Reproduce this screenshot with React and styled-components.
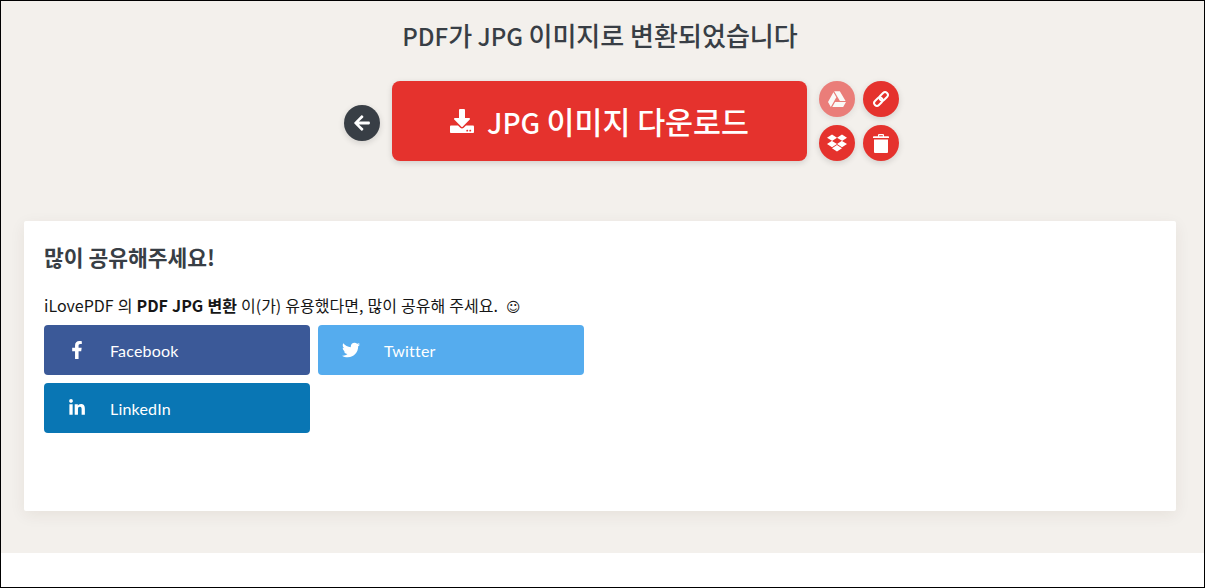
import React from 'react'
import styled, { createGlobalStyle } from 'styled-components'
import { FaArrowLeft, FaDownload, FaGoogleDrive, FaDropbox, FaFacebookF, FaTwitter, FaLinkedinIn } from 'react-icons/fa'

const GlobalStyle = createGlobalStyle`
  html, body { margin: 0; padding: 0; background: #fff; }
  * { box-sizing: border-box; }
  body { font-family: "Noto Sans CJK KR", "Noto Sans", sans-serif; }
`

const Frame = styled.div`
  width: 1205px;
  height: 588px;
  border: 1px solid #000;
  background: #fff;
  overflow: hidden;
`

const Main = styled.main`
  height: 552px;
  background: #f3f0ec;
  padding: 0 28px 0 23px;
  display: flex;
  flex-direction: column;
`

const Title = styled.h2`
  margin: 0;
  height: 80px;
  padding-top: 16px;
  text-align: center;
  font-size: 24px;
  line-height: 36px;
  font-weight: 500;
  color: #383e45;
`

// hangul runs sit a little larger than the latin around them
const Ko = styled.span`
  font-size: 1.085em;
`

const Actions = styled.div`
  display: flex;
  justify-content: center;
  align-items: center;
  height: 80px;
  gap: 12px;
  margin-left: 43px;
`

const RoundButton = styled.a`
  width: 36px;
  height: 36px;
  border-radius: 50%;
  display: flex;
  align-items: center;
  justify-content: center;
  color: #fff;
  font-size: ${({ $size }) => $size || 18}px;
  background: ${({ $dark }) => ($dark ? '#383e45' : '#e5322d')};
  opacity: ${({ $faded }) => ($faded ? 0.6 : 1)};
  box-shadow: 0 2px 6px rgba(0, 0, 0, 0.14);
`

const BackButton = styled(RoundButton)`
  margin-top: 4px;
`

const DownloadButton = styled.a`
  width: 415px;
  height: 80px;
  border-radius: 8px;
  background: #e5322d;
  color: #fff;
  display: flex;
  align-items: center;
  justify-content: center;
  gap: 13px;
  font-size: 28px;
  font-weight: 500;
  box-shadow: 0 2px 6px rgba(0, 0, 0, 0.14);
`

const SideGrid = styled.div`
  display: grid;
  grid-template-columns: 36px 36px;
  grid-auto-rows: 36px;
  gap: 8px;
`

const Card = styled.section`
  margin-top: 60px;
  height: 290px;
  background: #fff;
  padding: 21px 20px 20px;
  border-radius: 2px;
  box-shadow: 0 4px 16px rgba(72, 41, 0, 0.07);
`

const CardTitle = styled.h3`
  margin: 0;
  font-size: 21.5px;
  line-height: 30px;
  font-weight: 700;
  color: #383e45;
`

const CardText = styled.p`
  margin: 21px 0 0;
  font-size: 16px;
  line-height: 24px;
  color: #161616;
  word-spacing: 0.5px;
  strong { font-weight: 700; }
`

const Smile = styled.span`
  font-family: "DejaVu Sans", sans-serif;
  font-size: 14px;
  margin-left: 4px;
`

const ShareGrid = styled.div`
  display: grid;
  grid-template-columns: repeat(2, 266px);
  grid-auto-rows: 50px;
  gap: 8px;
  margin-top: 6px;
`

const ShareButton = styled.a`
  display: flex;
  align-items: center;
  border-radius: 4px;
  background: ${({ $color }) => $color};
  color: #fff;
  font-family: "Lato", "Noto Sans", sans-serif;
  font-size: 16px;
  letter-spacing: 0.2px;
`

const ShareIcon = styled.span`
  width: 66px;
  display: flex;
  justify-content: center;
  font-size: 18px;
  margin-top: -1px;
`

const LinkIcon = () => (
  <svg width="18" height="18" viewBox="0 0 18 18" fill="none" stroke="currentColor" strokeWidth="2">
    <g transform="rotate(-45 9 9)">
      <rect x="0.5" y="6.2" width="9.5" height="5.6" rx="2.8" />
      <rect x="8" y="6.2" width="9.5" height="5.6" rx="2.8" />
    </g>
  </svg>
)

const TrashIcon = () => (
  <svg width="16" height="19" viewBox="0 0 16 19" fill="currentColor">
    <path d="M5 2.2V1a1 1 0 0 1 1-1h4a1 1 0 0 1 1 1v1.2h4.2a.8.8 0 0 1 .8.8V4H0V3a.8.8 0 0 1 .8-.8zM6.2 1.2v1h3.6v-1z" />
    <path d="M1 5.5h14V18a1 1 0 0 1-1 1H2a1 1 0 0 1-1-1z" />
  </svg>
)

const shares = [
  { name: 'Facebook', color: '#3b5998', Icon: FaFacebookF },
  { name: 'Twitter', color: '#55acee', Icon: FaTwitter },
  { name: 'LinkedIn', color: '#0976b4', Icon: FaLinkedinIn },
]

export default function App() {
  return (
    <Frame>
      <GlobalStyle />
      <Main>
        <Title>PDF<Ko>가</Ko> JPG <Ko>이미지로 변환되었습니다</Ko></Title>
        <Actions>
          <BackButton $dark><FaArrowLeft /></BackButton>
          <DownloadButton>
            <FaDownload size={24} />
            <span>JPG <Ko>이미지 다운로드</Ko></span>
          </DownloadButton>
          <SideGrid>
            <RoundButton $faded><FaGoogleDrive /></RoundButton>
            <RoundButton><LinkIcon /></RoundButton>
            <RoundButton $size={20}><FaDropbox /></RoundButton>
            <RoundButton><TrashIcon /></RoundButton>
          </SideGrid>
        </Actions>
        <Card>
          <CardTitle>많이 공유해주세요!</CardTitle>
          <CardText>iLovePDF 의 <strong>PDF JPG 변환</strong> 이(가) 유용했다면, 많이 공유해 주세요. <Smile>☺</Smile></CardText>
          <ShareGrid>
            {shares.map(({ name, color, Icon }) => (
              <ShareButton key={name} $color={color}>
                <ShareIcon><Icon /></ShareIcon>
                {name}
              </ShareButton>
            ))}
          </ShareGrid>
        </Card>
      </Main>
    </Frame>
  )
}
